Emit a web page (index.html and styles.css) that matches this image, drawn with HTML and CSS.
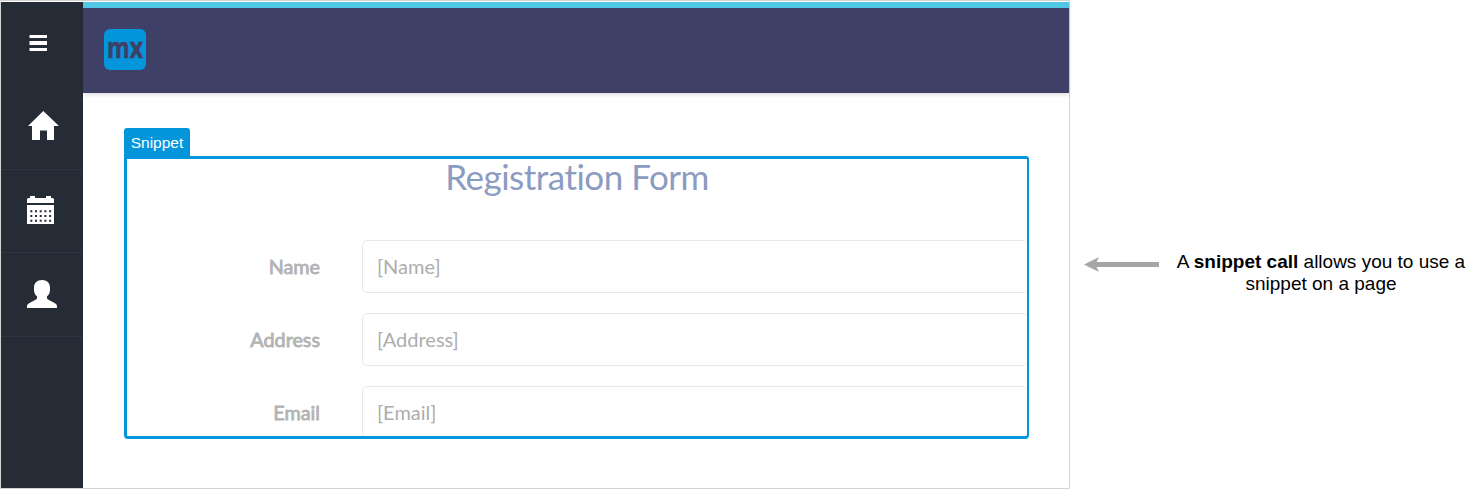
FILE: index.html
```html
<!DOCTYPE html>
<html lang="en">
<head>
<meta charset="utf-8">
<title>Registration Form</title>
<link rel="stylesheet" href="styles.css">
</head>
<body>
<div class="window">
  <nav class="sidebar">
    <a class="item toggle"><svg width="18" height="16" viewBox="0 0 18 16"><path d="M.5 0h17.500v3H.5zM.5 6h17.500v4H.5zM.5 13h17.500v3H.5z"/></svg></a>
    <a class="item home"><svg width="31" height="29" viewBox="0 0 31 29"><path d="M15.300 0 31 15H26V29H19V19.500H12V29H4V15H0Z"/></svg></a>
    <a class="item calendar"><svg width="27" height="28" viewBox="0 0 27 28"><path d="M0 7V3.500Q0 2 1.500 2H3V0H8V2H19V0H24V2H25.500Q27 2 27 3.500V7ZM0 9H27V28H0Z"/><path class="dots" d="M3.300 15.300H25M3.300 20H25M3.300 24.700H25"/></svg></a>
    <a class="item person"><svg width="30" height="28" viewBox="0 0 30 28"><path d="M15 0C20 0 23 3 23 7.500V10C23 13 21.700 15 20 16.300V18C20 18.800 20.300 19 21 19.400L28 23.200Q30 24.400 30 26V28H0V26Q0 24.400 2 23.200L9 19.400C9.700 19 10 18.800 10 18V16.300C8.300 15 7 13 7 10V7.500C7 3 10 0 15 0Z"/></svg></a>
  </nav>
  <main class="page">
    <header class="topbar">
      <svg class="logo" width="42" height="41" viewBox="0 0 42 41"><rect width="42" height="41" rx="6"/><text x="3" y="29" textLength="36" lengthAdjust="spacingAndGlyphs">mx</text></svg>
    </header>
    <div class="content">
      <div class="tab">Snippet</div>
      <section class="snippet">
        <h1 class="title">Registration Form</h1>
        <div class="row"><label class="label">Name</label><div class="field">[Name]</div></div>
        <div class="row"><label class="label">Address</label><div class="field">[Address]</div></div>
        <div class="row"><label class="label">Email</label><div class="field">[Email]</div></div>
      </section>
    </div>
  </main>
</div>
<aside class="note">
  <svg class="arrow" width="75" height="16" viewBox="0 0 75 16"><path d="M0 7.500 15 0 12.500 5H75V10H12.500L15 15Z"/></svg>
  <p class="caption">A <b>snippet call</b> allows you to use a<br>snippet on a page</p>
</aside>
</body>
</html>
```
FILE: styles.css
```css
* { box-sizing: border-box; }
body {
  margin: 0;
  display: flex;
  height: 489px;
  overflow: hidden;
  background: #fff;
  font-family: "Liberation Sans", Arial, sans-serif;
}
svg { display: block; }
.window {
  display: flex;
  flex: none;
  width: 1070px;
  height: 489px;
  border: 1px solid #d4d4d4;
  padding-top: 1px;
}
.sidebar {
  width: 82px;
  background: #252c36;
  fill: #fff;
}
.item {
  display: block;
  height: 84px;
  border-bottom: 1px solid #2d3542;
}
.toggle { border: 0; padding: 33px 0 0 28px; }
.home { padding: 25px 0 0 27px; }
.calendar { height: 83px; padding: 26px 0 0 26px; }
.person { padding: 27px 0 0 26px; }
.dots {
  fill: none;
  stroke: #252c36;
  stroke-width: 2;
  stroke-dasharray: 2 2.700;
}
.page { flex: 1; min-width: 0; }
.topbar {
  height: 91px;
  padding: 21px;
  border-top: 6px solid #50c8e4;
  background: #3f4068;
  box-shadow: 0 2px 4px rgba(0, 0, 0, .13);
}
.logo { fill: #0595db; overflow: visible; }
.logo text {
  fill: #3f4068;
  stroke: #3f4068;
  stroke-width: .6px;
  font: 700 28.500px "Open Sans", sans-serif;
}
.content { padding: 35px 40px 0 41px; }
.tab {
  width: 66px;
  height: 28px;
  border-radius: 3px 3px 0 0;
  background: #0595db;
  color: #fff;
  font-size: 15.500px;
  line-height: 30px;
  text-align: center;
}
.snippet {
  height: 283px;
  overflow: hidden;
  border: 3px solid #0595db;
  border-right-width: 2px;
  border-radius: 0 3px 4px 4px;
  font-family: Lato, sans-serif;
}
.title {
  height: 81px;
  margin: 0;
  color: #8c9bc1;
  font-size: 35px;
  font-weight: 400;
  letter-spacing: -.5px;
  line-height: 35px;
  text-align: center;
}
.row {
  display: flex;
  gap: 42px;
  height: 53px;
  margin-bottom: 20px;
  font-size: 20px;
  line-height: 50px;
}
.label {
  width: 193px;
  color: #b3b3b3;
  font-size: 19.800px;
  line-height: 52px;
  -webkit-text-stroke: .8px #b3b3b3;
  text-align: right;
}
.field {
  flex: 1;
  margin-right: -1px;
  padding-left: 14px;
  border: 1px solid #e8e8e8;
  border-radius: 5px;
  color: #adadad;
}
.note {
  display: flex;
  flex: none;
  align-items: flex-start;
  padding: 251px 0 0 14px;
}
.arrow { margin-top: 6px; fill: #a5a5a5; }
.caption {
  width: 324px;
  margin: 0;
  color: #000;
  font-size: 19px;
  line-height: 22px;
  text-align: center;
  white-space: nowrap;
}
```
